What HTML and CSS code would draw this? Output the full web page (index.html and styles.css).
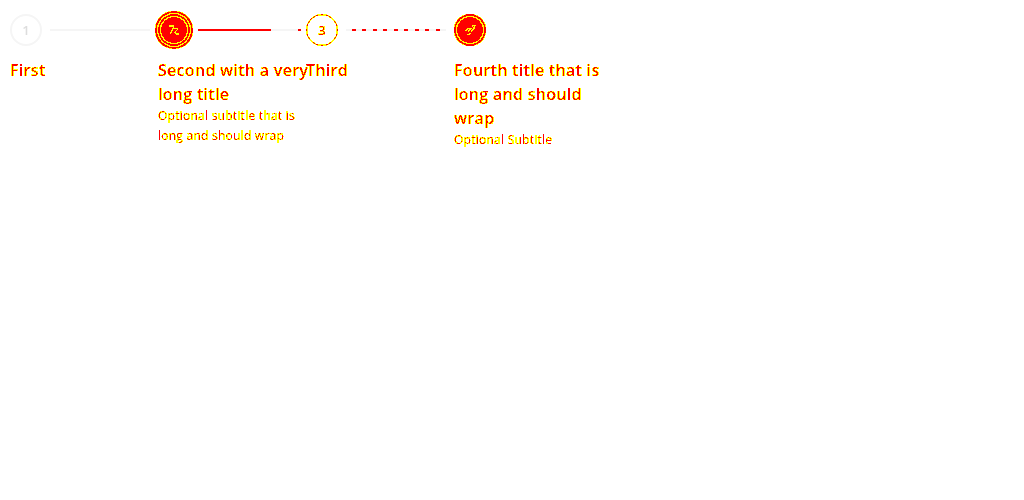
FILE: index.html
```html
<!DOCTYPE html>
<html lang="en">
<head>
  <meta charset="UTF-8">
  <title>Stepper</title>
  <link rel="stylesheet" href="styles.css">
</head>
<body>

<svg class="defs" width="0" height="0">
  <filter id="harsh" color-interpolation-filters="sRGB" x="0" y="0" width="100%" height="100%">
    <feComponentTransfer>
      <feFuncR type="discrete" tableValues="0 1 1 1"/>
      <feFuncG type="discrete" tableValues="0 1 1 1"/>
      <feFuncB type="discrete" tableValues="0 0 0 0 0 0 0 0 0 0 0 0 0 0 0 1"/>
    </feComponentTransfer>
  </filter>
</svg>

<div class="stepper">
  <div class="step">
    <div class="step-head">
      <div class="circle circle-idle">1</div>
      <div class="line"></div>
    </div>
    <div class="title harsh">First</div>
  </div>

  <div class="step">
    <div class="step-head">
      <div class="circle-box harsh">
        <div class="circle circle-active">
          <svg width="14" height="14" viewBox="0 0 14 14" fill="none" stroke="#ffd0d0" stroke-width="1">
            <path d="M2 3h5L3.500 11M7.500 5.500h3.500L8 9.500l1 1.500h3"/>
          </svg>
        </div>
      </div>
      <div class="line line-progress"></div>
    </div>
    <div class="title harsh">Second with a very long title</div>
    <div class="subtitle harsh">Optional subtitle that is long and should wrap</div>
  </div>

  <div class="step">
    <div class="step-head">
      <div class="circle-box harsh">
        <div class="circle circle-outline">3</div>
      </div>
      <div class="line line-dashed"></div>
    </div>
    <div class="title harsh">Third</div>
  </div>

  <div class="step">
    <div class="step-head">
      <div class="circle-box harsh">
        <div class="circle circle-done">
          <svg width="14" height="14" viewBox="0 0 14 14" fill="none" stroke="#ffd0d0" stroke-width="1.2">
            <path d="M2 8l3-2.500h2.500L5 8.500M8.500 3l3.500-.500-1 3-3 3.500M4 11.500l3-.500 1-1"/>
          </svg>
        </div>
      </div>
    </div>
    <div class="title harsh">Fourth title that is long and should wrap</div>
    <div class="subtitle harsh">Optional Subtitle</div>
  </div>
</div>

</body>
</html>
```

FILE: styles.css
```css
body {
  margin: 0;
  background: #fff;
  font-family: "Open Sans", sans-serif;
}
.defs {
  display: block;
  height: 0;
}
.harsh {
  background: #fff;
  filter: url(#harsh);
  mix-blend-mode: multiply;
}
.stepper {
  display: flex;
  padding: 14px 10px;
}
.step {
  width: 148px;
}
.step-head {
  display: flex;
  align-items: center;
  height: 32px;
  margin-bottom: 12px;
}
.circle-box {
  flex: none;
  padding: 6px;
  margin: -6px;
}
.circle {
  flex: none;
  box-sizing: border-box;
  width: 32px;
  height: 32px;
  border-radius: 50%;
  display: flex;
  align-items: center;
  justify-content: center;
  font-size: 13px;
  font-weight: 600;
}
.circle-idle {
  border: 2px solid #f5f5f5;
  color: #ddd;
}
.circle-active {
  background: #f00;
  box-shadow: inset 0 0 0 2px #f00, inset 0 0 0 3px #ffd0d0, 0 0 0 1px #ffd0d0, 0 0 0 3px #f00;
}
.circle-outline {
  border: 1px solid #f00;
  color: #f00;
}
.circle-done {
  background: #f00;
  box-shadow: inset 0 0 0 2px #f00, inset 0 0 0 3px #ffd0d0;
}
.line {
  flex: 1;
  height: 2px;
  margin: 0 8px;
  background: #f5f5f5;
}
.line-progress {
  margin-right: 5px;
  background: linear-gradient(to right, #f00 73px, #f5f5f5 73px, #f5f5f5 100px, #f00 100px);
}
.line-dashed {
  background: repeating-linear-gradient(to right, #f5f5f5 0, #f5f5f5 6px, #f00 6px, #f00 10px, #f5f5f5 10px, #f5f5f5 10.5px);
}
.title {
  margin-right: -4px;
  font-size: 16px;
  font-weight: 600;
  line-height: 24px;
  letter-spacing: 0.3px;
  color: #f00;
}
.subtitle {
  font-size: 12px;
  line-height: 20px;
  letter-spacing: 0.25px;
  color: #f00;
}
```
